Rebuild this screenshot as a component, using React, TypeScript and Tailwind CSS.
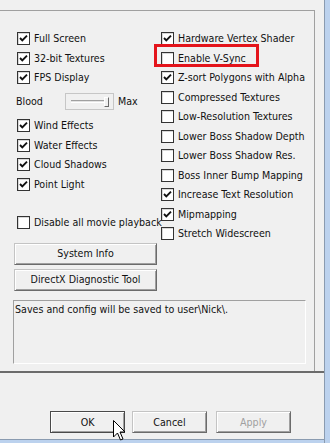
const font = "font-['DejaVu_Sans_Condensed','DejaVu_Sans',sans-serif] font-stretch-condensed";

function Check({ label, checked }: { label: string; checked?: boolean }) {
  return (
    <div className="flex items-center gap-[4px] h-[19.5px]">
      <span className="w-[13px] h-[13px] border border-[#333] bg-white flex items-center justify-center shrink-0 shadow-[inset_1px_1px_0_#d8d8d8]">
        {checked && (
          <svg width="9" height="9" viewBox="0 0 9 9">
            <polyline points="1,4 3.3,6.4 8,1.6" fill="none" stroke="#111" strokeWidth="1.9" />
          </svg>
        )}
      </span>
      <span className="text-[10.6px] text-[#111] whitespace-nowrap leading-none">{label}</span>
    </div>
  );
}

function Btn({ label, className, disabled, isDefault }: { label: string; className?: string; disabled?: boolean; isDefault?: boolean }) {
  return (
    <button
      className={
        "h-[22px] bg-[#f0f0f0] border text-[10.6px] leading-none flex items-center justify-center " +
        (isDefault
          ? "border-[#4a4a4a] shadow-[inset_1px_1px_0_#fff,inset_-1px_-1px_0_#a0a0a0] "
          : "border-t-[#c4c4c4] border-l-[#c4c4c4] border-b-[#6b6b6b] border-r-[#6b6b6b] shadow-[inset_1px_1px_0_#fff,inset_-1px_-1px_0_#a0a0a0] ") +
        (disabled ? "text-[#a0a0a0] " : "text-[#111] ") +
        (className ?? "")
      }
    >
      {label}
    </button>
  );
}

export default function App() {
  return (
    <div className={"relative w-[330px] h-[443px] bg-[#f0f0f0] flex overflow-hidden " + font}>
      <div className="w-[324px] flex flex-col">
        {/* Settings frame */}
        <div className="mt-[10px] h-[361px] w-[315px] border-t border-r border-[#a0a0a0] pt-[18px]">
          <div className="flex">
            <div className="w-[161px] pl-[17px] flex flex-col">
              <Check label="Full Screen" checked />
              <Check label="32-bit Textures" checked />
              <Check label="FPS Display" checked />
              <div className="h-[28.5px] flex items-center ml-[-1px]">
                <span className="w-[49px] text-[10.6px] text-[#111]">Blood</span>
                <div className="w-[49px] h-[17px] border border-[#c6c6c6] flex items-center pl-[5px] pr-[4px]">
                  <div className="flex-1 h-[3px] border-t border-[#a0a0a0] border-b border-b-white bg-[#e3e3e3]" />
                  <div className="w-[5px] h-[10px] border-r border-b border-[#696969] border-t border-l border-t-white border-l-white bg-[#f0f0f0]" />
                </div>
                <span className="ml-[4px] text-[10.6px] text-[#111]">Max</span>
              </div>
              <Check label="Wind Effects" checked />
              <Check label="Water Effects" checked />
              <Check label="Cloud Shadows" checked />
              <Check label="Point Light" checked />
              <div className="mt-[19px]">
                <Check label="Disable all movie playback" />
              </div>
              <Btn label="System Info" className="ml-[-3px] mt-[10px] w-[143px]" />
              <Btn label="DirectX Diagnostic Tool" className="ml-[-3px] mt-[4px] w-[143px]" />
            </div>
            <div className="flex flex-col">
              <Check label="Hardware Vertex Shader" checked />
              <Check label="Enable V-Sync" />
              <Check label="Z-sort Polygons with Alpha" checked />
              <Check label="Compressed Textures" />
              <Check label="Low-Resolution Textures" />
              <Check label="Lower Boss Shadow Depth" />
              <Check label="Lower Boss Shadow Res." />
              <Check label="Boss Inner Bump Mapping" />
              <Check label="Increase Text Resolution" checked />
              <Check label="Mipmapping" checked />
              <Check label="Stretch Widescreen" />
            </div>
          </div>
          <div className="ml-[13px] mt-[9px] w-[293px] h-[64px] border border-t-[#a0a0a0] border-l-[#a0a0a0] border-b-white border-r-white px-[1px] pt-[2px] text-[10.6px] text-[#111] leading-[12px]">
            Saves and config will be saved to user\Nick\.
          </div>
        </div>
        <div className="h-[2px] bg-[#6b6b6b]" />
        {/* Dialog buttons */}
        <div className="flex-1 flex items-start pt-[38px] pl-[50px]">
          <Btn label="OK" isDefault className="w-[75px]" />
          <Btn label="Cancel" className="ml-[7px] w-[75px]" />
          <Btn label="Apply" disabled className="ml-[9px] w-[75px]" />
        </div>
        <div className="h-[1px] bg-[#8a9bb0]" />
        <div className="h-[3px] bg-[#bcd2ee]" />
      </div>
      <div className="w-[1px] bg-[#8a9bb0]" />
      <div className="w-[5px] bg-[#bcd2ee]" />

      {/* Red annotation box */}
      <div className="absolute left-[154px] top-[44px] w-[105px] h-[23px] border-[3px] border-[#e4141b]" />

      {/* Mouse cursor */}
      <svg className="absolute left-[113px] top-[420px]" width="14" height="24" viewBox="0 0 14 24">
        <path d="M0.5 0.5 L0.5 17 L4.5 13 L7.5 20 L10 19 L7 12 L12 12 Z" fill="#fff" stroke="#000" strokeWidth="1" strokeLinejoin="round" />
      </svg>
    </div>
  );
}
